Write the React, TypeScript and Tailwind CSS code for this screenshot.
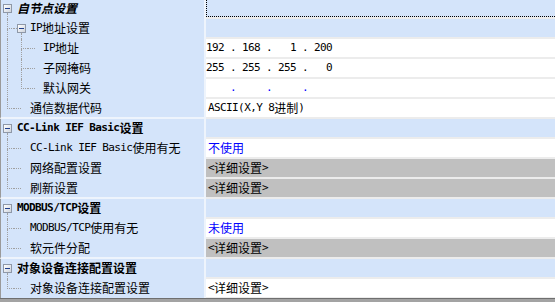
import React from 'react';

type Guide = 'vert' | 'tee' | 'elbow' | 'stub' | 'root' | 'group';

type Cell =
  | { kind: 'cat'; focus?: boolean }
  | { kind: 'ip'; parts: string[] }
  | { kind: 'text'; text: string; tone?: 'blue' | 'gray' };

type Row = {
  label: string;
  level: 0 | 1 | 2;
  guides: Guide[];
  value: Cell;
  strong?: boolean;
  italic?: boolean;
  endsGroup?: boolean;
};

const rows: Row[] = [
  { label: '自节点设置', level: 0, guides: ['root'], value: { kind: 'cat', focus: true }, strong: true, italic: true },
  { label: 'IP地址设置', level: 1, guides: ['tee', 'group'], value: { kind: 'cat' } },
  { label: 'IP地址', level: 2, guides: ['vert', 'tee', 'stub'], value: { kind: 'ip', parts: ['192', '168', '1', '200'] } },
  { label: '子网掩码', level: 2, guides: ['vert', 'tee', 'stub'], value: { kind: 'ip', parts: ['255', '255', '255', '0'] } },
  { label: '默认网关', level: 2, guides: ['vert', 'elbow', 'stub'], value: { kind: 'ip', parts: ['', '', '', ''] } },
  { label: '通信数据代码', level: 1, guides: ['elbow', 'stub'], value: { kind: 'text', text: 'ASCII(X,Y 8进制)' }, endsGroup: true },
  { label: 'CC-Link IEF Basic设置', level: 0, guides: ['root'], value: { kind: 'cat' }, strong: true },
  { label: 'CC-Link IEF Basic使用有无', level: 1, guides: ['tee', 'stub'], value: { kind: 'text', text: '不使用', tone: 'blue' } },
  { label: '网络配置设置', level: 1, guides: ['tee', 'stub'], value: { kind: 'text', text: '<详细设置>', tone: 'gray' } },
  { label: '刷新设置', level: 1, guides: ['elbow', 'stub'], value: { kind: 'text', text: '<详细设置>', tone: 'gray' }, endsGroup: true },
  { label: 'MODBUS/TCP设置', level: 0, guides: ['root'], value: { kind: 'cat' }, strong: true },
  { label: 'MODBUS/TCP使用有无', level: 1, guides: ['tee', 'stub'], value: { kind: 'text', text: '未使用', tone: 'blue' } },
  { label: '软元件分配', level: 1, guides: ['elbow', 'stub'], value: { kind: 'text', text: '<详细设置>', tone: 'gray' }, endsGroup: true },
  { label: '对象设备连接配置设置', level: 0, guides: ['root'], value: { kind: 'cat' }, strong: true },
  { label: '对象设备连接配置设置', level: 1, guides: ['elbow', 'stub'], value: { kind: 'text', text: '<详细设置>' } },
];

const colWidth = ['w-[13px]', 'w-[14px]', 'w-[13px]'];
const lineOffset = ['ml-[6px]', 'ml-[7px]', 'ml-[6px]'];
const labelPad = ['pl-[3px]', 'pl-[2px]', 'pl-[2px]'];
const line = 'border-dotted border-[#a0a0a0]';
const mono = "font-['DejaVu_Sans_Mono','Liberation_Mono',monospace] text-[11px] tracking-[-0.6px] whitespace-pre";

// half-width runs get a mono face so they take 6px like the original bitmap font
const Mixed = ({ text }: { text: string }) => (
  <>
    {text
      .split(/([\x20-\x7e]+)/)
      .filter(Boolean)
      .map((part, i) =>
        /^[\x20-\x7e]+$/.test(part) ? (
          <span key={i} className={mono}>{part}</span>
        ) : (
          <span key={i}>{part}</span>
        )
      )}
  </>
);

const Box = ({ className = '' }: { className?: string }) => (
  <div className={`${className} w-[9px] h-[9px] shrink-0 border border-[#8e98a8] bg-linear-to-br from-white to-[#cfd4dc] flex items-center justify-center`}>
    <div className="w-[5px] h-px bg-[#1f3f8c]" />
  </div>
);

function GuideCell({ type, col }: { type: Guide; col: number }) {
  const off = lineOffset[col];
  return (
    <div className={`${colWidth[col]} shrink-0 flex flex-col h-[20px]`}>
      {type === 'vert' && <div className={`${off} h-full border-l ${line}`} />}
      {(type === 'tee' || type === 'elbow') && (
        <>
          <div className={`${off} h-[10px] border-l border-b ${line}`} />
          {type === 'tee' && <div className={`${off} h-[10px] border-l ${line}`} />}
        </>
      )}
      {type === 'stub' && <div className={`w-[7px] h-[10px] border-b ${line}`} />}
      {type === 'root' && (
        <>
          <div className="h-[5px]" />
          <Box className="ml-[2px]" />
          <div className={`${off} flex-1 border-l ${line}`} />
        </>
      )}
      {type === 'group' && (
        <>
          <div className="h-[5px]" />
          <div className="flex">
            <div className={`w-[3px] h-[5px] border-b ${line}`} />
            <Box />
          </div>
          <div className={`${off} flex-1 border-l ${line}`} />
        </>
      )}
    </div>
  );
}

function ValueCell({ value }: { value: Cell }) {
  const base = 'flex-1 h-[20px] border-b-2 border-[#ececec] flex';
  if (value.kind === 'cat') {
    return (
      <div className={`${base} bg-[#d4e4fa]`}>
        {value.focus && <div className="w-full h-[18px] border-l border-b border-dotted border-black" />}
      </div>
    );
  }
  if (value.kind === 'ip') {
    const empty = value.parts.every(p => p === '');
    return (
      <div className={`${base} bg-white items-center ${mono}`}>
        {value.parts.map((p, i) => (
          <React.Fragment key={i}>
            <span className="w-[18px] text-right">{p}</span>
            {i < 3 && <span className={`w-[18px] text-center ${empty ? 'text-[#0000ff]' : ''}`}>.</span>}
          </React.Fragment>
        ))}
      </div>
    );
  }
  const bg = value.tone === 'gray' ? 'bg-[#c0c0c0]' : 'bg-white';
  const color = value.tone === 'blue' ? 'text-[#0000ff]' : 'text-black';
  return (
    <div className={`${base} ${bg} ${color} items-center pl-[2px] whitespace-nowrap`}>
      <Mixed text={value.text} />
    </div>
  );
}

export default function App() {
  return (
    <div className="w-[555px] h-[302px] overflow-hidden bg-[#a3a3a3] text-[12px] text-black font-['Noto_Sans_CJK_SC',sans-serif]">
      <div className="h-[298px] overflow-hidden bg-white">
        <div className="-mt-px">
          {rows.map((row, i) => (
            <div key={i} className="flex h-[20px]">
              <div
                className={`w-[206px] shrink-0 h-[20px] flex bg-[#d4e4fa] border-l border-l-[#9a9a9a] border-r-2 border-r-[#eef4fc] ${
                  row.endsGroup ? 'border-b-2 border-b-[#eef4fc]' : ''
                }`}
              >
                {row.guides.map((g, c) => (
                  <GuideCell key={c} type={g} col={c} />
                ))}
                <div
                  className={`flex items-center h-[18px] whitespace-nowrap ${labelPad[row.level]} ${row.strong ? 'font-bold' : ''} ${
                    row.italic ? 'italic' : ''
                  }`}
                >
                  <Mixed text={row.label} />
                </div>
              </div>
              <ValueCell value={row.value} />
            </div>
          ))}
        </div>
      </div>
      <div className="h-px bg-[#6f6f6f]" />
    </div>
  );
}
